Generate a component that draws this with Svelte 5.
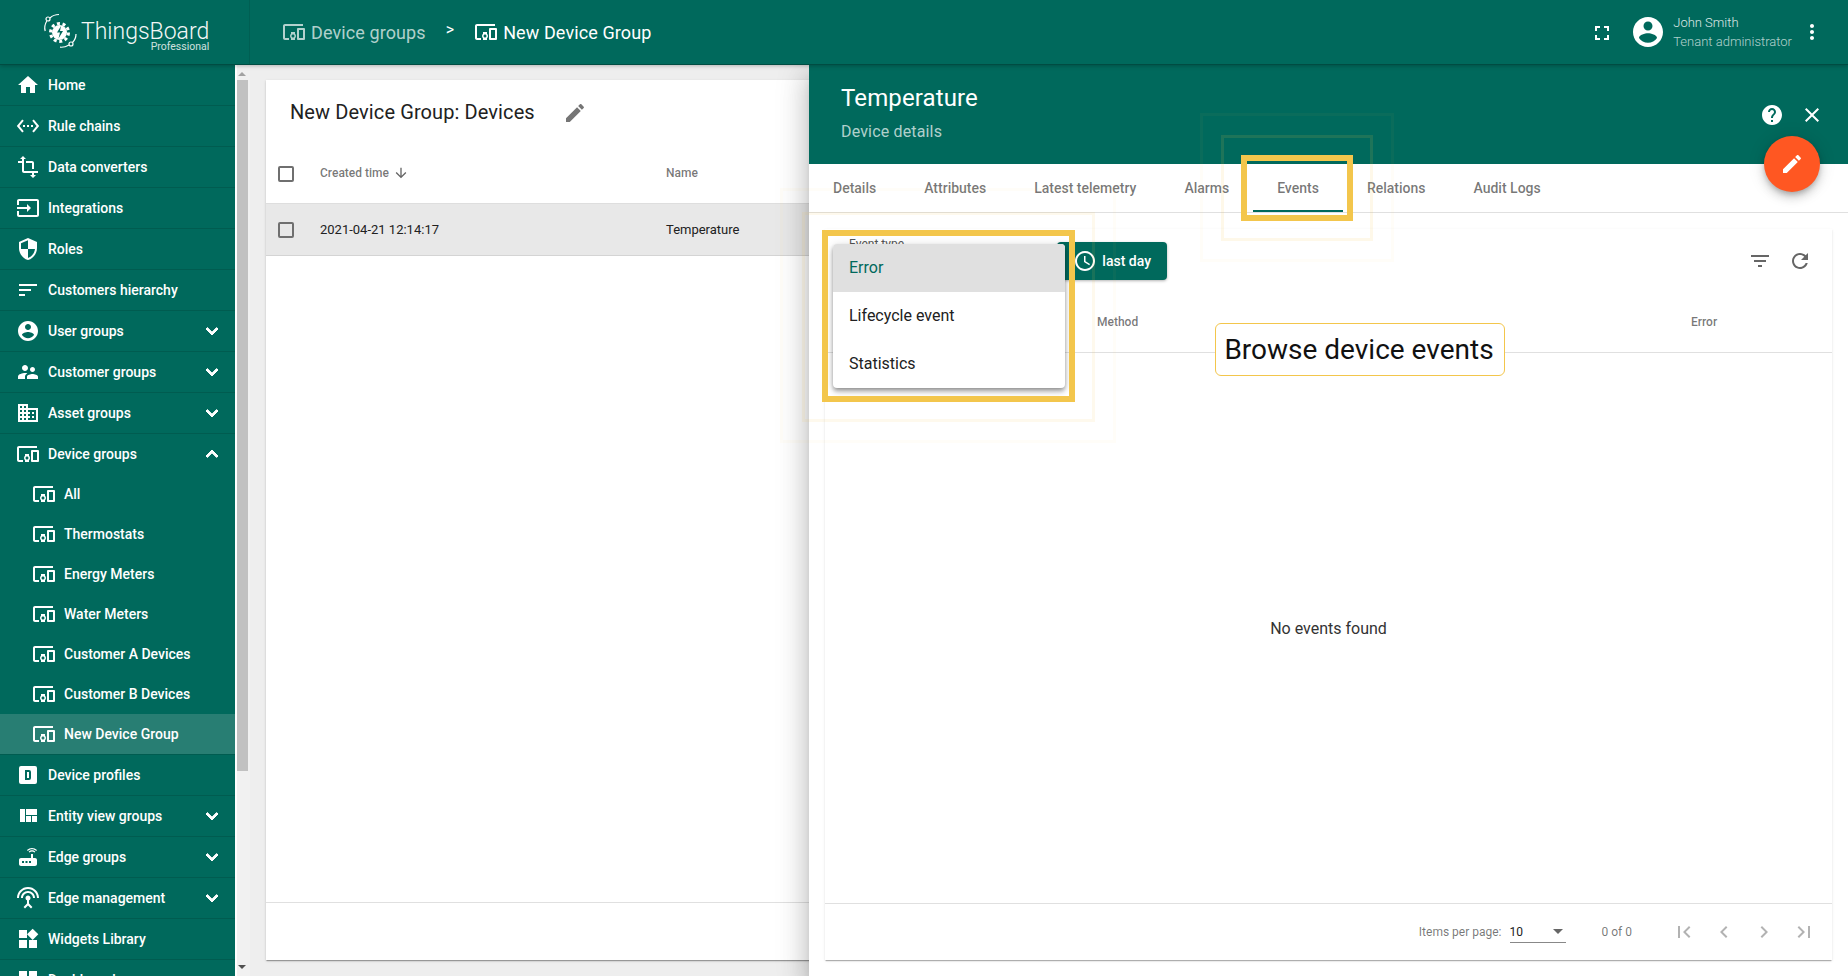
<script>
  const P = {
    home: 'M10 20v-6h4v6h5v-8h3L12 3 2 12h3v8z',
    rule: 'M7.77 6.76L6.23 5.48.82 12l5.41 6.52 1.54-1.28L3.42 12l4.35-5.24zM7 13h2v-2H7v2zm10-2h-2v2h2v-2zm-6 2h2v-2h-2v2zm6.77-7.52l-1.54 1.28L20.58 12l-4.35 5.24 1.54 1.28L23.18 12l-5.41-6.52z',
    transform: 'M22 18v-2H8V4h2L7 1 4 4h2v2H2v2h4v8c0 1.1.9 2 2 2h8v2h-2l3 3 3-3h-2v-2h4zM10 8h6v6h2V8c0-1.1-.9-2-2-2h-6v2z',
    input: 'M21 3.01H3c-1.1 0-2 .9-2 2V9h2V4.99h18v14.03H3V15H1v4.01c0 1.1.9 1.98 2 1.98h18c1.1 0 2-.88 2-1.98v-14c0-1.11-.9-2-2-2zM11 16l4-4-4-4v3H1v2h10v3z',
    security: 'M12 1L3 5v6c0 5.55 3.84 10.74 9 12 5.16-1.26 9-6.45 9-12V5l-9-4zm0 10.99h7c-.53 4.12-3.28 7.79-7 8.94V12H5V6.3l7-3.11v8.8z',
    sort: 'M3 18h6v-2H3v2zM3 6v2h18V6H3zm0 7h12v-2H3v2z',
    account: 'M12 2C6.48 2 2 6.48 2 12s4.48 10 10 10 10-4.48 10-10S17.52 2 12 2zm0 3c1.66 0 3 1.34 3 3s-1.34 3-3 3-3-1.34-3-3 1.34-3 3-3zm0 14.2c-2.5 0-4.71-1.28-6-3.22.03-1.99 4-3.08 6-3.08 1.99 0 5.97 1.09 6 3.08-1.29 1.94-3.5 3.22-6 3.22z',
    supervisor: 'M16.5 12c1.38 0 2.49-1.12 2.49-2.5S17.88 7 16.5 7C15.12 7 14 8.12 14 9.5s1.12 2.5 2.5 2.5zM9 11c1.66 0 2.99-1.34 2.99-3S10.66 5 9 5C7.34 5 6 6.34 6 8s1.34 3 3 3zm7.5 3c-1.83 0-5.5.92-5.5 2.75V19h11v-2.25c0-1.83-3.67-2.75-5.5-2.75zM9 13c-2.33 0-7 1.17-7 3.5V19h7v-2.25c0-.85.33-2.34 2.37-3.47C10.5 13.1 9.66 13 9 13z',
    domain: 'M12 7V3H2v18h20V7H12zM6 19H4v-2h2v2zm0-4H4v-2h2v2zm0-4H4V9h2v2zm0-4H4V5h2v2zm4 12H8v-2h2v2zm0-4H8v-2h2v2zm0-4H8V9h2v2zm0-4H8V5h2v2zm10 12h-8v-2h2v-2h-2v-2h2v-2h-2V9h8v10zm-2-8h-2v2h2v-2zm0 4h-2v2h2v-2z',
    devices: 'M3 6h18V4H3c-1.1 0-2 .9-2 2v12c0 1.1.9 2 2 2h4v-2H3V6zm10 6H9v1.78c-.61.55-1 1.33-1 2.22s.39 1.67 1 2.22V20h4v-1.78c.61-.55 1-1.34 1-2.22s-.39-1.67-1-2.22V12zm-2 5.5c-.83 0-1.5-.67-1.5-1.5s.67-1.5 1.5-1.5 1.5.67 1.5 1.5-.67 1.5-1.5 1.5zM22 8h-6c-.5 0-1 .5-1 1v10c0 .5.5 1 1 1h6c.5 0 1-.5 1-1V9c0-.5-.5-1-1-1zm-1 10h-4v-8h4v8z',
    profile: 'M9 7v10h4a2 2 0 0 0 2-2V9a2 2 0 0 0-2-2H9zm2 2h2v6h-2V9zM5 3h14a2 2 0 0 1 2 2v14a2 2 0 0 1-2 2H5a2 2 0 0 1-2-2V5a2 2 0 0 1 2-2z',
    quilt: 'M10 18h5v-6h-5v6zm-6 0h5V5H4v13zm12 0h5v-6h-5v6zM10 5v6h11V5H10z',
    router: 'M20.2 5.9l.8-.8C19.6 3.7 17.8 3 16 3s-3.6.7-5 2.1l.8.8C13 4.8 14.5 4.2 16 4.2s3 .6 4.2 1.7zm-.9.8c-.9-.9-2.1-1.4-3.3-1.4s-2.4.5-3.3 1.4l.8.8c.7-.7 1.6-1 2.5-1 .9 0 1.8.3 2.5 1l.8-.8zM19 13h-2V9h-2v4H5c-1.1 0-2 .9-2 2v4c0 1.1.9 2 2 2h14c1.1 0 2-.9 2-2v-4c0-1.1-.9-2-2-2zM8 18H6v-2h2v2zm3.5 0h-2v-2h2v2zm3.5 0h-2v-2h2v2z',
    antenna: 'M12 5c-3.87 0-7 3.13-7 7h2c0-2.76 2.24-5 5-5s5 2.24 5 5h2c0-3.87-3.13-7-7-7zm1 9.29c.88-.39 1.5-1.26 1.5-2.29 0-1.38-1.12-2.5-2.5-2.5S9.5 10.62 9.5 12c0 1.02.62 1.9 1.5 2.29v3.3L7.59 21 9 22.41l3-3 3 3L16.41 21 13 17.59v-3.3zM12 1C5.93 1 1 5.93 1 12h2c0-4.97 4.03-9 9-9s9 4.03 9 9h2c0-6.07-4.93-11-11-11z',
    widgets: 'M13 13v8h8v-8h-8zM3 21h8v-8H3v8zM3 3v8h8V3H3zm13.66-1.31L11 7.34 16.66 13l5.66-5.66-5.66-5.65z',
    dashboard: 'M3 13h8V3H3v10zm0 8h8v-6H3v6zm10 0h8V11h-8v10zm0-18v6h8V3h-8z',
    more: 'M16.59 8.59L12 13.17 7.41 8.59 6 10l6 6 6-6z',
    less: 'M12 8l-6 6 1.41 1.41L12 10.83l4.59 4.58L18 14z',
    fullscreen: 'M7 14H5v5h5v-2H7v-3zm-2-4h2V7h3V5H5v5zm12 7h-3v2h5v-5h-2v3zM14 5v2h3v3h2V5h-5z',
    vert: 'M12 8c1.1 0 2-.9 2-2s-.9-2-2-2-2 .9-2 2 .9 2 2 2zm0 2c-1.1 0-2 .9-2 2s.9 2 2 2 2-.9 2-2-.9-2-2-2zm0 6c-1.1 0-2 .9-2 2s.9 2 2 2 2-.9 2-2-.9-2-2-2z',
    help: 'M12 2C6.48 2 2 6.48 2 12s4.48 10 10 10 10-4.48 10-10S17.52 2 12 2zm1 17h-2v-2h2v2zm2.07-7.75l-.9.92C13.45 12.9 13 13.5 13 15h-2v-.5c0-1.1.45-2.1 1.17-2.83l1.24-1.26c.37-.36.59-.86.59-1.41 0-1.1-.9-2-2-2s-2 .9-2 2H8c0-2.21 1.79-4 4-4s4 1.79 4 4c0 .88-.36 1.68-.93 2.25z',
    close: 'M19 6.41L17.59 5 12 10.59 6.41 5 5 6.41 10.59 12 5 17.59 6.41 19 12 13.41 17.59 19 19 17.59 13.41 12z',
    edit: 'M3 17.25V21h3.75L17.81 9.94l-3.75-3.75L3 17.25zM20.71 7.04c.39-.39.39-1.02 0-1.41l-2.34-2.34c-.39-.39-1.02-.39-1.41 0l-1.83 1.83 3.75 3.75 1.83-1.83z',
    filter: 'M10 18h4v-2h-4v2zM3 6v2h18V6H3zm3 7h12v-2H6v2z',
    refresh: 'M17.65 6.35C16.2 4.9 14.21 4 12 4c-4.42 0-7.99 3.58-7.99 8s3.57 8 7.99 8c3.73 0 6.84-2.55 7.73-6h-2.08c-.82 2.33-3.04 4-5.65 4-3.31 0-6-2.69-6-6s2.69-6 6-6c1.66 0 3.14.69 4.22 1.78L13 11h7V4l-2.35 2.35z',
    schedule: 'M11.99 2C6.47 2 2 6.48 2 12s4.47 10 9.99 10C17.52 22 22 17.52 22 12S17.52 2 11.99 2zM12 20c-4.42 0-8-3.58-8-8s3.58-8 8-8 8 3.58 8 8-3.58 8-8 8zm.5-13H11v6l5.25 3.15.75-1.23-4.5-2.67z',
    down: 'M20 12l-1.41-1.41L13 16.17V4h-2v12.17l-5.58-5.59L4 12l8 8 8-8z',
    first: 'M18.41 16.59L13.82 12l4.59-4.59L17 6l-6 6 6 6zM6 6h2v12H6z',
    prev: 'M15.41 7.41L14 6l-6 6 6 6 1.41-1.41L10.83 12z',
    next: 'M10 6L8.59 7.41 13.17 12l-4.58 4.59L10 18l6-6z',
    last: 'M5.59 7.41L10.18 12l-4.59 4.59L7 18l6-6-6-6zM16 6h2v12h-2z'
  };
  const nav = [
    { t: 'Home', i: 'home' },
    { t: 'Rule chains', i: 'rule' },
    { t: 'Data converters', i: 'transform' },
    { t: 'Integrations', i: 'input' },
    { t: 'Roles', i: 'security' },
    { t: 'Customers hierarchy', i: 'sort' },
    { t: 'User groups', i: 'account', c: 'more' },
    { t: 'Customer groups', i: 'supervisor', c: 'more' },
    { t: 'Asset groups', i: 'domain', c: 'more' },
    { t: 'Device groups', i: 'devices', c: 'less', open: true },
    { t: 'All', i: 'devices', sub: true },
    { t: 'Thermostats', i: 'devices', sub: true },
    { t: 'Energy Meters', i: 'devices', sub: true },
    { t: 'Water Meters', i: 'devices', sub: true },
    { t: 'Customer A Devices', i: 'devices', sub: true },
    { t: 'Customer B Devices', i: 'devices', sub: true },
    { t: 'New Device Group', i: 'devices', sub: true, active: true },
    { t: 'Device profiles', i: 'profile' },
    { t: 'Entity view groups', i: 'quilt', c: 'more' },
    { t: 'Edge groups', i: 'router', c: 'more' },
    { t: 'Edge management', i: 'antenna', c: 'more' },
    { t: 'Widgets Library', i: 'widgets' },
    { t: 'Dashboards', i: 'dashboard', c: 'more' }
  ];
  const tabs = ['Details', 'Attributes', 'Latest telemetry', 'Alarms', 'Events', 'Relations', 'Audit Logs'];
</script>

{#snippet icon(name, cls = '')}
  <svg class="ic {cls}" viewBox="0 0 24 24" aria-hidden="true"><path fill-rule="evenodd" d={P[name]} /></svg>
{/snippet}

<div class="app">
  <header class="top">
    <div class="brand">
      <svg class="logo" viewBox="0 0 36 36" aria-hidden="true">
        <g fill="none" stroke="#fff" stroke-width="1.2">
          <circle cx="5" cy="6" r="2" />
          <path d="M7 5c2-2 5-3.500 9-3.500M3.800 8C2 11 1 14 2.200 18" />
          <circle cx="28" cy="31" r="2" />
          <path d="M26 32c-3 1.800-6 2.500-9 2.200M29.500 29.500c2-2 3.500-5 3.500-8.500" />
        </g>
        <circle cx="16.500" cy="19.500" r="7.500" fill="#fff" />
        <circle cx="16.500" cy="19.500" r="9" fill="none" stroke="#fff" stroke-width="3" stroke-dasharray="3 2.650" />
        <path d="M18 13l-4 6.500h3l-1.500 6 4.500-7.500h-3z" fill="#00695c" />
      </svg>
      <div class="brand-text">
        <span class="brand-name">ThingsBoard</span>
        <span class="brand-sub">Professional</span>
      </div>
    </div>
    <div class="crumbs">
      <span class="crumb dim">{@render icon('devices')}Device groups</span>
      <span class="sep">&gt;</span>
      <span class="crumb">{@render icon('devices')}New Device Group</span>
    </div>
    <div class="userbar">
      {@render icon('fullscreen', 'fs')}
      <svg class="ic avatar" viewBox="0 0 24 24" aria-hidden="true"><path d={P.account} /></svg>
      <div class="user">
        <span class="uname">John Smith</span>
        <span class="urole">Tenant administrator</span>
      </div>
      {@render icon('vert', 'vert')}
    </div>
  </header>

  <div class="body">
    <aside class="side">
      <nav class="menu">
        {#each nav as n}
          <div class="row" class:sub={n.sub} class:open={n.open} class:active={n.active}>
            {@render icon(n.i)}
            <span class="label">{n.t}</span>
            {#if n.c}{@render icon(n.c, 'chev')}{/if}
          </div>
        {/each}
      </nav>
      <div class="scroll">
        <span class="arr up"></span>
        <span class="thumb"></span>
        <span class="arr dn"></span>
      </div>
    </aside>

    <main class="main">
      <section class="card">
        <div class="card-title">
          <h1>New Device Group: Devices</h1>
          {@render icon('edit', 'pencil')}
        </div>
        <div class="grid head">
          <span class="check"></span>
          <span class="created">Created time {@render icon('down', 'sortarrow')}</span>
          <span>Name</span>
        </div>
        <div class="grid item">
          <span class="check"></span>
          <span>2021-04-21 12:14:17</span>
          <span>Temperature</span>
        </div>
        <div class="spacer"></div>
        <div class="card-foot"></div>
      </section>
    </main>

    <section class="panel">
      <div class="panel-head">
        <div class="panel-titles">
          <div class="ptitle">Temperature</div>
          <div class="psub">Device details</div>
        </div>
        <div class="panel-actions">
          {@render icon('help')}
          {@render icon('close')}
        </div>
      </div>
      <div class="tabs">
        {#each tabs as t}
          <div class="tab" class:on={t === 'Events'}>{t}</div>
        {/each}
      </div>
      <div class="events">
        <div class="ev-tools">
          <div class="field">Event type</div>
          <button class="timebtn">{@render icon('schedule')}<span>last day</span></button>
          <div class="tools-r">
            {@render icon('filter')}
            {@render icon('refresh')}
          </div>
        </div>
        <div class="ev-head">
          <span></span>
          <span>Method</span>
          <span>Error</span>
        </div>
        <div class="ev-empty">No events found</div>
        <div class="pager">
          <span class="ipp">Items per page:</span>
          <div class="psize"><span>10</span><i class="caret"></i></div>
          <span class="range">0 of 0</span>
          <div class="pbtns">
            {@render icon('first')}
            {@render icon('prev')}
            {@render icon('next')}
            {@render icon('last')}
          </div>
        </div>
      </div>
    </section>
  </div>

  <button class="fab" aria-label="Edit">{@render icon('edit')}</button>

  <div class="dropdown">
    <div class="opt sel">Error</div>
    <div class="opt">Lifecycle event</div>
    <div class="opt">Statistics</div>
  </div>

  <div class="ring r1a"></div>
  <div class="ring r1b"></div>
  <div class="hl h1"></div>
  <div class="ring r2a"></div>
  <div class="ring r2b"></div>
  <div class="hl h2"></div>
  <div class="callout">Browse device events</div>
</div>

<style>
  :global(body) { margin: 0; background: #eee; }
  .app {
    position: relative; width: 1848px; height: 976px; overflow: hidden;
    display: grid; grid-template-rows: 65px 1fr;
    font-family: Roboto, "Liberation Sans", sans-serif; color: #212121;
  }
  .ic { width: 24px; height: 24px; flex: none; fill: currentColor; display: block; }

  .top {
    background: #00695c; color: #fff; display: flex; align-items: center;
    border-bottom: 1px solid #004c42; box-sizing: border-box; z-index: 3;
    box-shadow: 0 1px 4px rgba(0,0,0,.25); padding-right: 24px;
  }
  .brand {
    width: 250px; height: 64px; box-sizing: border-box; flex: none; display: flex; align-items: flex-start;
    padding: 13px 0 0 43px; border-right: 1px solid #005f53;
  }
  .logo { width: 36px; height: 36px; flex: none; }
  .brand-text { display: flex; flex-direction: column; margin-left: 2px; }
  .brand-name { font-size: 23px; line-height: 20px; margin-top: 9px; opacity: .95; font-weight: 300; margin-right: 1px; }
  .brand-sub { font-size: 10.5px; line-height: 10px; text-align: right; opacity: .8; margin-right: 1px; }
  .crumbs { display: flex; align-items: center; margin-left: 32px; font-size: 18px; letter-spacing: .1px; }
  .crumb { display: flex; align-items: center; gap: 5px; }
  .crumb .ic { width: 24px; height: 24px; }
  .dim { color: rgba(255,255,255,.7); }
  .sep { font-size: 16px; margin: -5px 20px 0 20px; }
  .userbar { margin-left: auto; display: flex; align-items: center; }
  .fs { width: 24px; height: 24px; margin-top: 2px; margin-left: 1px; }
  .avatar { width: 36px; height: 36px; margin-left: 16px; }
  .user { display: flex; flex-direction: column; margin-left: 7px; font-size: 13px; font-weight: 300; line-height: 19px; }
  .uname { opacity: .85; font-size: 13px; }
  .urole { color: rgba(255,255,255,.7); }
  .vert { margin-left: 8px; }

  .body { display: grid; grid-template-columns: 250px 1fr; min-height: 0; position: relative; }
  .side { display: flex; min-height: 0; overflow: hidden; }
  .menu { width: 235px; background: #00695c; flex: none; color: #fff; }
  .row {
    height: 41px; box-sizing: border-box; display: flex; align-items: center;
    padding: 0 11px 0 16px; gap: 8px; font-size: 14px; font-weight: 500;
    border-bottom: 1px solid #005c50; flex-shrink: 0;
  }
  .row.open { border-bottom: 0; height: 40px; }
  .row.sub { height: 40px; border-bottom: 0; padding-left: 32px; }
  .row.active { background: #287e73; height: 41px; border-bottom: 1px solid #005c50; }
  .label { flex: 1; white-space: nowrap; }
  .chev { color: #fff; stroke: currentColor; stroke-width: 1; }
  .scroll { width: 15px; background: #f1f1f1; border-left: 2px solid #fff; box-sizing: border-box; position: relative; }
  .thumb { position: absolute; left: 0; top: 15px; width: 11px; height: 691px; background: #c1c1c1; }
  .arr { position: absolute; left: 1px; width: 0; height: 0; border: 4px solid transparent; border-left-width: 4.500px; border-right-width: 4.500px; }
  .up { top: 3px; border-bottom: 4px solid #a3a3a3; }
  .dn { bottom: 3px; border-top: 4px solid #505050; }

  .main { padding: 15px 16px 16px; background: #eee; min-height: 0; display: flex; }
  .card {
    flex: 1; background: #fff; display: flex; flex-direction: column;
    box-shadow: 0 2px 1px -1px rgba(0,0,0,.2), 0 1px 1px rgba(0,0,0,.14), 0 1px 3px rgba(0,0,0,.12);
  }
  .card-title { height: 64px; display: flex; align-items: center; padding: 1px 0 0 24px; box-sizing: border-box; }
  .card-title h1 { margin: -1px 0 0; font-size: 20px; font-weight: 400; color: #212121; letter-spacing: .005em; }
  .pencil { margin-left: 28px; color: #757575; }
  .grid { display: grid; grid-template-columns: 54px 346px 1fr; align-items: center; }
  .grid.head { height: 60px; padding-bottom: 2px; font-size: 12px; font-weight: 500; color: rgba(0,0,0,.54); border-bottom: 1px solid #dedede; box-sizing: border-box; }
  .grid.item { height: 52px; box-sizing: border-box; font-size: 13px; background: #e8e8e8; border-bottom: 1px solid #d4d4d4; color: #212121; }
  .check { width: 12px; height: 12px; border: 2px solid #6f6f6f; border-radius: 2px; margin-left: 12px; }
  .grid.head .check { margin-top: 2px; }
  .created { display: flex; align-items: center; gap: 3px; }
  .sortarrow { width: 16px; height: 16px; color: #666; margin-left: 1px; }
  .spacer { flex: 1; }
  .card-foot { height: 57px; border-top: 1px solid #e0e0e0; }

  .panel {
    position: absolute; left: 809px; top: 0; right: 0; bottom: 0; background: #fff; z-index: 2;
    display: flex; flex-direction: column;
    box-shadow: 0 8px 10px -5px rgba(0,0,0,.2), 0 16px 24px 2px rgba(0,0,0,.14), 0 6px 30px 5px rgba(0,0,0,.12);
  }
  .panel-head { height: 99px; flex: none; background: #00695c; color: #fff; display: flex; justify-content: space-between; align-items: flex-end; padding: 0 24px 37px 32px; box-sizing: border-box; }
  .panel-titles { align-self: flex-start; padding-top: 18px; }
  .ptitle { font-size: 24px; line-height: 30px; letter-spacing: .005em; }
  .psub { font-size: 16px; line-height: 20px; margin-top: 9px; letter-spacing: .01em; color: rgba(255,255,255,.7); }
  .panel-actions { display: flex; gap: 16px; }
  .tabs { height: 49px; flex: none; display: flex; border-bottom: 1px solid #e0e0e0; box-sizing: border-box; }
  .tab { padding: 0 24px; font-size: 14px; font-weight: 500; color: rgba(0,0,0,.54); display: flex; align-items: center; position: relative; }
  .tab.on::after { content: ''; position: absolute; left: 0; right: 0; bottom: 0; height: 2px; background: #00695c; }
  .events {
    flex: 1; margin: 16px; min-height: 0; display: flex; flex-direction: column; background: #fff;
    box-shadow: 0 2px 1px -1px rgba(0,0,0,.2), 0 1px 1px rgba(0,0,0,.1), 0 1px 3px rgba(0,0,0,.08);
  }
  .ev-tools { height: 64px; flex: none; display: flex; align-items: flex-start; padding: 13px 20px 0 24px; box-sizing: border-box; }
  .field { width: 208px; font-size: 12px; color: #555; margin-top: -5px; }
  .timebtn {
    height: 38px; width: 110px; box-sizing: border-box; border: 0; border-radius: 4px; background: #00695c; color: #fff;
    display: flex; align-items: center; justify-content: flex-end; gap: 5px; padding: 0 16px 0 0;
    font: 500 14px Roboto, sans-serif; box-shadow: 0 1px 3px rgba(0,0,0,.3);
  }
  .tools-r { margin-left: auto; display: flex; gap: 16px; color: #666; margin-top: 7px; }
  .ev-head {
    height: 60px; flex: none; padding-bottom: 1px; box-sizing: border-box; display: grid; grid-template-columns: 272px 594px 1fr;
    align-items: center; font-size: 12px; font-weight: 500; color: rgba(0,0,0,.54); border-bottom: 1px solid #e0e0e0;
  }
  .ev-empty { flex: 1; display: flex; align-items: center; justify-content: center; font-size: 16px; color: #333; }
  .pager {
    height: 57px; flex: none; box-sizing: border-box; border-top: 1px solid #e0e0e0; display: flex; align-items: center;
    justify-content: flex-end; padding-right: 8px; font-size: 12px; color: rgba(0,0,0,.54);
  }
  .psize { width: 56px; height: 22px; margin-left: 8px; box-sizing: border-box; border-bottom: 1px solid #888; display: flex; justify-content: space-between; align-items: center; color: #212121; padding-right: 2px; }
  .caret { width: 0; height: 0; border: 5px solid transparent; border-top-color: #666; border-bottom: 0; margin-right: 1px; }
  .range { margin-left: 36px; margin-right: 32px; }
  .pbtns { display: flex; color: rgba(0,0,0,.3); }
  .pbtns .ic { margin: 0 8px; }

  .fab {
    position: absolute; left: 1764px; top: 136px; width: 56px; height: 56px; border: 0; padding: 16px; border-radius: 50%;
    background: #ff5722; color: #fff; z-index: 6;
    box-shadow: 0 3px 5px -1px rgba(0,0,0,.2), 0 6px 10px rgba(0,0,0,.14), 0 1px 18px rgba(0,0,0,.12);
  }
  .dropdown {
    position: absolute; left: 833px; top: 244px; width: 232px; background: #fff; border-radius: 4px; z-index: 5; overflow: hidden;
    box-shadow: 0 2px 4px -1px rgba(0,0,0,.3), 0 4px 5px rgba(0,0,0,.2), 0 1px 10px rgba(0,0,0,.12);
  }
  .opt { height: 48px; box-sizing: border-box; display: flex; align-items: center; padding: 0 16px 2px; font-size: 16px; color: #212121; }
  .opt.sel { background: #e0e0e0; color: #00695c; }
  .hl { position: absolute; box-sizing: border-box; border: 6px solid #f3c64c; z-index: 7; }
  .h1 { left: 822px; top: 230px; width: 253px; height: 172px; }
  .h2 { left: 1241px; top: 155px; width: 112px; height: 66px; }
  .ring { position: absolute; box-sizing: border-box; z-index: 7; }
  .r1a { left: 802px; top: 212px; width: 293px; height: 210px; border: 3px solid rgba(243,198,76,.1); }
  .r1b { left: 780px; top: 188px; width: 336px; height: 255px; border: 3px solid rgba(243,198,76,.04); }
  .r2a { left: 1221px; top: 135px; width: 152px; height: 106px; border: 3px solid rgba(243,198,76,.12); }
  .r2b { left: 1200px; top: 113px; width: 194px; height: 149px; border: 3px solid rgba(243,198,76,.04); }
  .callout {
    position: absolute; left: 1215px; top: 323px; width: 290px; height: 53px; box-sizing: border-box; z-index: 8; padding-right: 2px;
    background: #fff; border: 1px solid #f3c64c; border-radius: 6px; display: flex; align-items: center; justify-content: center;
    font-size: 28px; color: #111;
  }
</style>
